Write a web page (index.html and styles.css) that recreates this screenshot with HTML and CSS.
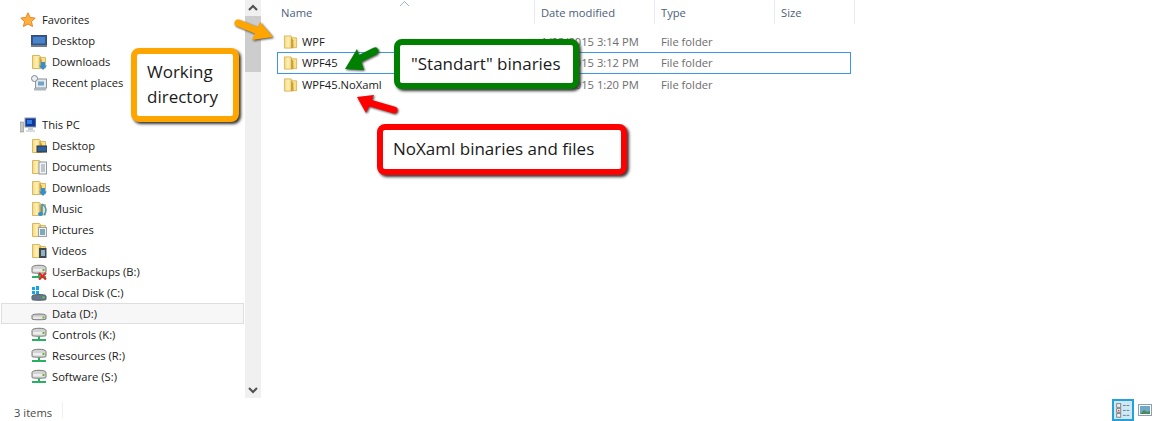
FILE: index.html
```html
<!DOCTYPE html>
<html lang="en">
<head>
<meta charset="utf-8">
<title>WPF binaries folder</title>
<link rel="stylesheet" href="styles.css">
</head>
<body>
<svg class="defs" width="0" height="0" aria-hidden="true">
  <defs>
    <linearGradient id="fy" x1="0" y1="0" x2="1" y2="0">
      <stop offset="0" stop-color="#f3d77f"/><stop offset=".5" stop-color="#fdf0b4"/><stop offset="1" stop-color="#f0cf72"/>
    </linearGradient>
    <symbol id="folder" viewBox="0 0 16 16">
      <path d="M1.5 1.5h7l1 1v12h-8z" fill="url(#fy)" stroke="#d9b75e"/>
      <path d="M9 3.5h5.5v10.5H11z" fill="#f8e08e" stroke="#dcb95f"/>
      <path d="M8.5 3l2.5 3v9l-2.500-1z" fill="#c9a13f"/>
    </symbol>
    <symbol id="drive" viewBox="0 0 16 16">
      <path d="M1 9.500c0-2 14-2 14 0v3.500c0 1-14 1-14 0z" fill="#c9c9c9" stroke="#7b7b7b"/>
      <rect x="2" y="10.500" width="12" height="2.500" fill="#e7e7e7"/>
      <rect x="11.500" y="10.500" width="2" height="2" fill="#62b32f"/>
    </symbol>
    <symbol id="net" viewBox="0 0 16 16">
      <path d="M1 3.500c0-3 14-3 14 0v5c0 1-14 1-14 0z" fill="#d3d3d3" stroke="#7b7b7b"/>
      <rect x="2" y="5" width="12" height="2.500" fill="#eeeeee"/>
      <rect x="11.500" y="5" width="2" height="2" fill="#62b32f"/>
      <path d="M7 9.500h2v2.500h6v2H1v-2h6z" fill="#28b163"/>
    </symbol>
  </defs>
</svg>

<div class="window">
  <div class="main">
    <nav class="nav">
      <div class="navrow group">
        <svg class="gicon" viewBox="0 0 16 16"><path d="M8 .8l2.200 4.700 5 .6-3.700 3.400 1 5L8 12l-4.500 2.500 1-5L.8 6.100l5-.6z" fill="#fbb040" stroke="#e8842a"/></svg>
        <span>Favorites</span>
      </div>
      <div class="navrow">
        <svg class="icon" viewBox="0 0 16 16"><rect x=".5" y="2.500" width="15" height="9.500" fill="#2a5a9e" stroke="#3c4e68"/><rect x="2" y="4" width="12" height="6.500" fill="#4c83c8"/><rect x="0" y="12" width="16" height="2" fill="#6d7c90"/></svg>
        <span>Desktop</span>
      </div>
      <div class="navrow">
        <svg class="icon" viewBox="0 0 16 16"><use href="#folder"/><path d="M10 8h4v3.500h2L12 16l-4-4.500h2z" fill="#2f8fdc"/></svg>
        <span>Downloads</span>
      </div>
      <div class="navrow">
        <svg class="icon" viewBox="0 0 16 16"><rect x="4.500" y="4" width="11" height="9" fill="#e4e9ee" stroke="#8a949e"/><rect x="7" y="6.500" width="6" height="4" fill="#6fa3c9"/><circle cx="3.500" cy="3.500" r="3" fill="#eceff2" stroke="#7f8890"/><rect x="3" y="13" width="12" height="2.500" fill="#aeb6bd"/></svg>
        <span>Recent places</span>
      </div>

      <div class="navrow group gap">
        <svg class="gicon" viewBox="0 0 16 16"><rect x="5" y="1" width="11" height="9" fill="#12389e" stroke="#8d9aa8"/><rect x="7" y="3" width="5" height="4" fill="#2f7fe0"/><rect x="8" y="10" width="5" height="3" fill="#c6ccd2"/><rect x="6" y="13" width="9" height="2" fill="#d8dcdf"/><rect x="0" y="5" width="3.500" height="10" fill="#c4c9c0" stroke="#8a8f88" stroke-width=".6"/></svg>
        <span>This PC</span>
      </div>
      <div class="navrow">
        <svg class="icon" viewBox="0 0 16 16"><use href="#folder"/><rect x="6" y="8" width="10" height="6" fill="#2c5f9e" stroke="#333"/></svg>
        <span>Desktop</span>
      </div>
      <div class="navrow">
        <svg class="icon" viewBox="0 0 16 16"><use href="#folder"/><rect x="8" y="3" width="7.500" height="12" fill="#f2f5f8" stroke="#8f9aa5"/><path d="M10 6h4M10 8h4M10 10h4M10 12h4" stroke="#8a96a2"/></svg>
        <span>Documents</span>
      </div>
      <div class="navrow">
        <svg class="icon" viewBox="0 0 16 16"><use href="#folder"/><path d="M10 8h4v3.500h2L12 16l-4-4.500h2z" fill="#2f8fdc"/></svg>
        <span>Downloads</span>
      </div>
      <div class="navrow">
        <svg class="icon" viewBox="0 0 16 16"><use href="#folder"/><path d="M11 3c3 2 4 4 4 6s-1 4-2 5" fill="none" stroke="#3a97d8" stroke-width="1.500"/><path d="M11 3v10" stroke="#2f8fdc" stroke-width="1.500"/><ellipse cx="9.500" cy="13" rx="2.500" ry="2" fill="#2f8fdc"/></svg>
        <span>Music</span>
      </div>
      <div class="navrow">
        <svg class="icon" viewBox="0 0 16 16"><use href="#folder"/><rect x="7.500" y="5.500" width="8" height="9" fill="#eef1f4" stroke="#9aa3ac"/><rect x="9" y="7" width="5" height="6" fill="#7fa9b8"/></svg>
        <span>Pictures</span>
      </div>
      <div class="navrow">
        <svg class="icon" viewBox="0 0 16 16"><use href="#folder"/><rect x="8" y="5" width="7.500" height="10" fill="#3d4a52"/><rect x="10" y="7" width="4" height="6" fill="#8fb3c4"/></svg>
        <span>Videos</span>
      </div>
      <div class="navrow">
        <svg class="icon" viewBox="0 0 16 16"><use href="#net"/><path d="M8 9l7 6.500M15 9l-7 6.500" stroke="#e0281e" stroke-width="2.200"/></svg>
        <span>UserBackups (B:)</span>
      </div>
      <div class="navrow">
        <svg class="icon" viewBox="0 0 16 16"><path d="M1 2h3v3H1zM5 1h3v4H5zM1 6h3v3H1zM5 6h3v3H5z" fill="#12a5ec"/><path d="M1 11c0-2 14-2 14 0v3.500c0 1-14 1-14 0z" fill="#64788a" stroke="#53616e"/><rect x="11.500" y="11.500" width="2" height="2" fill="#62d32f"/></svg>
        <span>Local Disk (C:)</span>
      </div>
      <div class="navrow selected">
        <svg class="icon" viewBox="0 0 16 16"><use href="#drive"/></svg>
        <span>Data (D:)</span>
      </div>
      <div class="navrow">
        <svg class="icon" viewBox="0 0 16 16"><use href="#net"/></svg>
        <span>Controls (K:)</span>
      </div>
      <div class="navrow">
        <svg class="icon" viewBox="0 0 16 16"><use href="#net"/></svg>
        <span>Resources (R:)</span>
      </div>
      <div class="navrow">
        <svg class="icon" viewBox="0 0 16 16"><use href="#net"/></svg>
        <span>Software (S:)</span>
      </div>
    </nav>

    <div class="scrollbar">
      <svg class="arrow" viewBox="0 0 16 16"><path d="M4 10l4-4 4 4" fill="none" stroke="#505050" stroke-width="2"/></svg>
      <div class="thumb"></div>
      <div class="track"></div>
      <svg class="arrow" viewBox="0 0 16 16"><path d="M4 6l4 4 4-4" fill="none" stroke="#505050" stroke-width="2"/></svg>
    </div>

    <section class="files">
      <header class="head">
        <div class="col name">Name<svg class="sort" viewBox="0 0 9 5"><path d="M0 5l4.500-4.500L9 5" fill="none" stroke="#9db6cf"/></svg></div>
        <div class="col date">Date modified</div>
        <div class="col type">Type</div>
        <div class="col size">Size</div>
      </header>
      <div class="rows">
        <div class="row">
          <svg class="ficon" viewBox="0 0 16 16"><use href="#folder"/></svg>
          <span class="fname">WPF</span><span class="fmeta">1/23/2015 3:14 PM</span><span class="fmeta">File folder</span>
        </div>
        <div class="row focus">
          <svg class="ficon" viewBox="0 0 16 16"><use href="#folder"/></svg>
          <span class="fname">WPF45</span><span class="fmeta">1/23/2015 3:12 PM</span><span class="fmeta">File folder</span>
        </div>
        <div class="row">
          <svg class="ficon" viewBox="0 0 16 16"><use href="#folder"/></svg>
          <span class="fname">WPF45.NoXaml</span><span class="fmeta">1/23/2015 1:20 PM</span><span class="fmeta">File folder</span>
        </div>
      </div>
    </section>
  </div>

  <footer class="status">
    <span class="count">3 items</span>
    <div class="views">
      <span class="view active">
        <svg viewBox="0 0 20 20" width="20" height="20"><rect x="3" y="3" width="4.500" height="4" fill="#f4f4f4" stroke="#777"/><rect x="3" y="8.500" width="4.500" height="4" fill="#f4f4f4" stroke="#777"/><rect x="3" y="14" width="4.500" height="4" fill="#f4f4f4" stroke="#777"/><rect x="4.500" y="10" width="1.500" height="1.500" fill="#d33"/><path d="M10 5h3M14 5h3M10 10.500h3M14 10.500h3M10 16h3M14 16h3" stroke="#66788a"/></svg>
      </span>
      <span class="view">
        <svg viewBox="0 0 14 12" width="14" height="12"><rect x=".5" y=".5" width="13" height="11" fill="#fff" stroke="#8aa0b5"/><rect x="2" y="2" width="10" height="8" fill="#6fa8c8"/><path d="M2 10l4-4 3 2 3-1v3z" fill="#4b8a52"/></svg>
      </span>
    </div>
  </footer>

  <div class="callout orange">Working<br>directory</div>
  <div class="callout green">"Standart" binaries</div>
  <div class="callout red">NoXaml binaries and files</div>

  <svg class="arrows" viewBox="0 0 1160 421" aria-hidden="true">
    <g class="arr"><path d="M238 23l20 8" stroke="#ffa500" stroke-width="7" stroke-linecap="round"/><path d="M260 22l13 15-21 3z" fill="#ffa500"/></g>
    <g class="arr"><path d="M375 51l-18 9" stroke="#008000" stroke-width="7" stroke-linecap="round"/><path d="M345 69l12-20 7 21z" fill="#008000"/></g>
    <g class="arr"><path d="M394 110l-24-7" stroke="#ff0000" stroke-width="7" stroke-linecap="round"/><path d="M357 97l17-2-8 18z" fill="#ff0000"/></g>
  </svg>
</div>
</body>
</html>
```

FILE: styles.css
```css
* { box-sizing: border-box; }
html, body { margin: 0; height: 100%; background: #fff; }
body { font: 11.2px/1 "Open Sans", "Liberation Sans", sans-serif; color: #1a1a1a; overflow: hidden; }
.defs { position: absolute; }
.window { position: relative; width: 1160px; height: 421px; display: flex; flex-direction: column; }
.main { flex: 0 0 398px; display: flex; }

.nav { width: 245px; padding: 9px 1px 0; display: flex; flex-direction: column; }
.navrow { height: 21px; flex: none; display: flex; align-items: center; padding-left: 30px; gap: 5px; white-space: nowrap; }
.navrow.group { padding-left: 19px; gap: 6px; }
.navrow.gap { margin-top: 21px; }
.navrow.selected { background: #f7f7f7; border: 1px solid #dedede; padding-left: 29px; }
.icon { width: 16px; height: 16px; flex: none; }
.gicon { width: 16px; height: 16px; flex: none; }

.scrollbar { width: 16px; background: #f0f0f0; display: flex; flex-direction: column; }
.arrow { width: 16px; height: 16px; flex: none; }
.thumb { height: 56px; background: #cdcdcd; flex: none; }
.track { flex: 1; }

.files { flex: 1; padding-left: 1px; }
.head { display: flex; height: 31px; color: #4c607a; }
.col { height: 24px; padding: 7px 0 0 6px; border-right: 1px solid #e3ecf4; position: relative; }
.col.name { width: 273px; padding-left: 19px; }
.col.date, .col.type { width: 120px; }
.col.size { width: 80px; }
.sort { position: absolute; left: 138px; top: 1px; width: 9px; height: 5px; }

.rows { margin-left: 15px; width: 574px; }
.row { height: 21px; display: grid; grid-template-columns: 19px 239px 120px 1fr; align-items: center; padding-left: 5px; border: 1px solid transparent; }
.row.focus { border-color: #3c96e6; height: 22px; }
.ficon { width: 15px; height: 16px; }
.fname { color: #1a1a1a; }
.fmeta { color: #6d6d6d; }

.status { flex: 1; display: flex; align-items: center; justify-content: space-between; padding: 0 8px 0 14px; color: #4a4a4a; }
.count { padding-right: 10px; height: 16px; line-height: 22px; border-right: 1px solid #f0f0f0; }
.views { display: flex; align-items: center; gap: 4px; }
.view { display: flex; align-items: center; justify-content: center; }
.view.active { width: 22px; height: 22px; background: #cde8f7; border: 2px solid #26a0da; }

.callout { position: absolute; background: #fff; border: 6px solid; border-radius: 8px; box-shadow: 2px 2px 3px #333; font-size: 17px; line-height: 25px; color: #1a1a1a; }
.orange { left: 131px; top: 48px; width: 108px; height: 74px; padding: 5px 0 0 10px; border-color: #ffa500; }
.green { left: 394px; top: 39px; width: 185px; height: 50px; padding: 6px 0 0 11px; border-color: #008000; white-space: nowrap; }
.red { left: 377px; top: 124px; width: 250px; height: 51px; padding: 6px 0 0 10px; border-color: #ff0000; white-space: nowrap; }

.arrows { position: absolute; left: 0; top: 0; width: 1160px; height: 421px; pointer-events: none; }
.arr { filter: drop-shadow(1px 1px 1px #444); }
```
